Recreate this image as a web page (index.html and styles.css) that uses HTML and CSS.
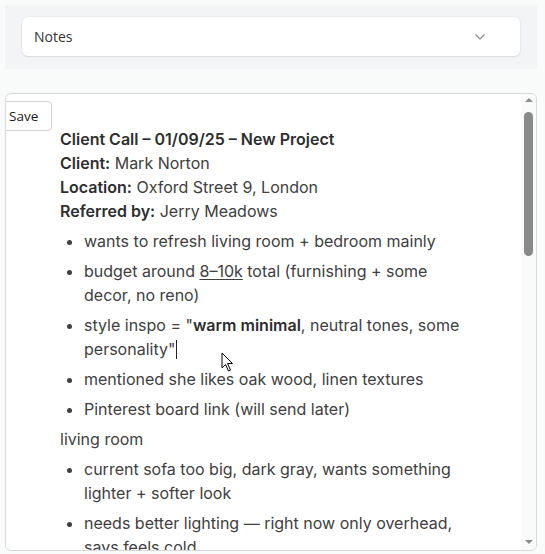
FILE: index.html
```html
<!DOCTYPE html>
<html>
<head>
<meta charset="utf-8">
<link rel="stylesheet" href="styles.css">
</head>
<body>
<div class="panel">
  <div class="select">
    <span class="select-label">Notes</span>
    <svg class="chevron" width="12" height="8" viewBox="0 0 12 8"><path d="M1.5 1.5 L6 6 L10.5 1.5" fill="none" stroke="#8a8a8a" stroke-width="1.2"/></svg>
  </div>
</div>
<div class="editor">
  <button class="save">Save</button>
  <div class="content">
    <div class="header">
      <div class="title">Client Call – 01/09/25 – New Project</div>
      <div><b>Client:</b> Mark Norton</div>
      <div><b>Location:</b> Oxford Street 9, London</div>
      <div><b>Referred by:</b> Jerry Meadows</div>
    </div>
    <ul>
      <li>wants to refresh living room + bedroom mainly</li>
      <li>budget around <u>8–10k</u> total (furnishing + some decor, no reno)</li>
      <li>style inspo = "<b>warm minimal</b>, neutral tones, some personality"<span class="caret"></span></li>
      <li>mentioned she likes oak wood, linen textures</li>
      <li>Pinterest board link (will send later)</li>
    </ul>
    <p>living room</p>
    <ul>
      <li>current sofa too big, dark gray, wants something lighter + softer look</li>
      <li>needs better lighting — right now only overhead, says feels cold</li>
    </ul>
  </div>
  <div class="scrollbar">
    <div class="arrow up"></div>
    <div class="thumb"></div>
    <div class="track"></div>
    <div class="arrow down"></div>
  </div>
</div>
<svg class="pointer" width="14" height="21" viewBox="0 0 14 21"><path d="M1 1 L1 16 L4.5 12.5 L7.5 19 L9.5 18 L6.5 11.5 L11.5 11.5 Z" fill="#fff" stroke="#000" stroke-width="1" stroke-linejoin="round"/></svg>
</body>
</html>
```

FILE: styles.css
```css
html, body {
  margin: 0;
  padding: 0;
}
body {
  background: #f9fafa;
  font-family: "Inter", "Noto Sans", sans-serif;
  position: relative;
  height: 554px;
  overflow: hidden;
}
.panel {
  margin: 5px 8px 0 5px;
  background: #f3f4f6;
  padding: 12px 17px 13px 17px;
}
.select {
  height: 39px;
  background: #fff;
  border-radius: 6px;
  box-shadow: 0 0 0 1px rgba(0,0,0,0.03), 0 1px 2px rgba(0,0,0,0.08);
  display: flex;
  align-items: center;
  justify-content: space-between;
  padding: 0 34px 0 12px;
}
.select-label {
  font-family: "Open Sans", "Noto Sans", sans-serif;
  font-size: 14px;
  color: #333;
}
.chevron {
  display: block;
}
.editor {
  position: relative;
  margin: 24px 8px 0 5px;
  height: 458px;
  box-sizing: border-box;
  border: 1px solid #d6d8da;
  border-radius: 6px;
  background: #fff;
  display: flex;
  overflow: hidden;
}
.save {
  position: absolute;
  top: 7px;
  left: -1px;
  width: 47px;
  height: 30px;
  box-sizing: border-box;
  border: 1px solid #d0d0d0;
  border-radius: 0 4px 4px 0;
  background: #fff;
  font-family: "Open Sans", "Noto Sans", sans-serif;
  font-size: 13.5px;
  color: #1a1a1a;
  padding: 0 0 0 3px;
  text-align: left;
}
.content {
  flex: 1;
  padding: 33px 53px 0 54px;
  font-size: 16px;
  line-height: 24px;
  color: #404040;
  overflow: hidden;
}
.content b, .title {
  font-weight: 600;
  color: #2e2e2e;
}
.content u {
  text-decoration-thickness: 1px;
  text-underline-offset: 2px;
}
ul {
  margin: 6px 0 0 0;
  padding: 0 0 0 24px;
}
li {
  margin-bottom: 6px;
}
p {
  margin: 0;
}
.caret {
  display: inline-block;
  width: 1px;
  height: 19px;
  background: #222;
  vertical-align: -4px;
  margin-left: 1px;
}
.scrollbar {
  width: 15px;
  display: flex;
  flex-direction: column;
  align-items: center;
  background: #fafafa;
}
.arrow {
  width: 0;
  height: 0;
  border-left: 4px solid transparent;
  border-right: 4px solid transparent;
}
.arrow.up {
  border-bottom: 4px solid #8c8c8c;
  margin-top: 4px;
}
.arrow.down {
  border-top: 4px solid #8c8c8c;
  margin-bottom: 6px;
}
.thumb {
  width: 9px;
  height: 144px;
  margin-top: 10px;
  background: #8a8a8a;
  border-radius: 5px;
}
.track {
  flex: 1;
}
.pointer {
  position: absolute;
  left: 221px;
  top: 352px;
}
```
